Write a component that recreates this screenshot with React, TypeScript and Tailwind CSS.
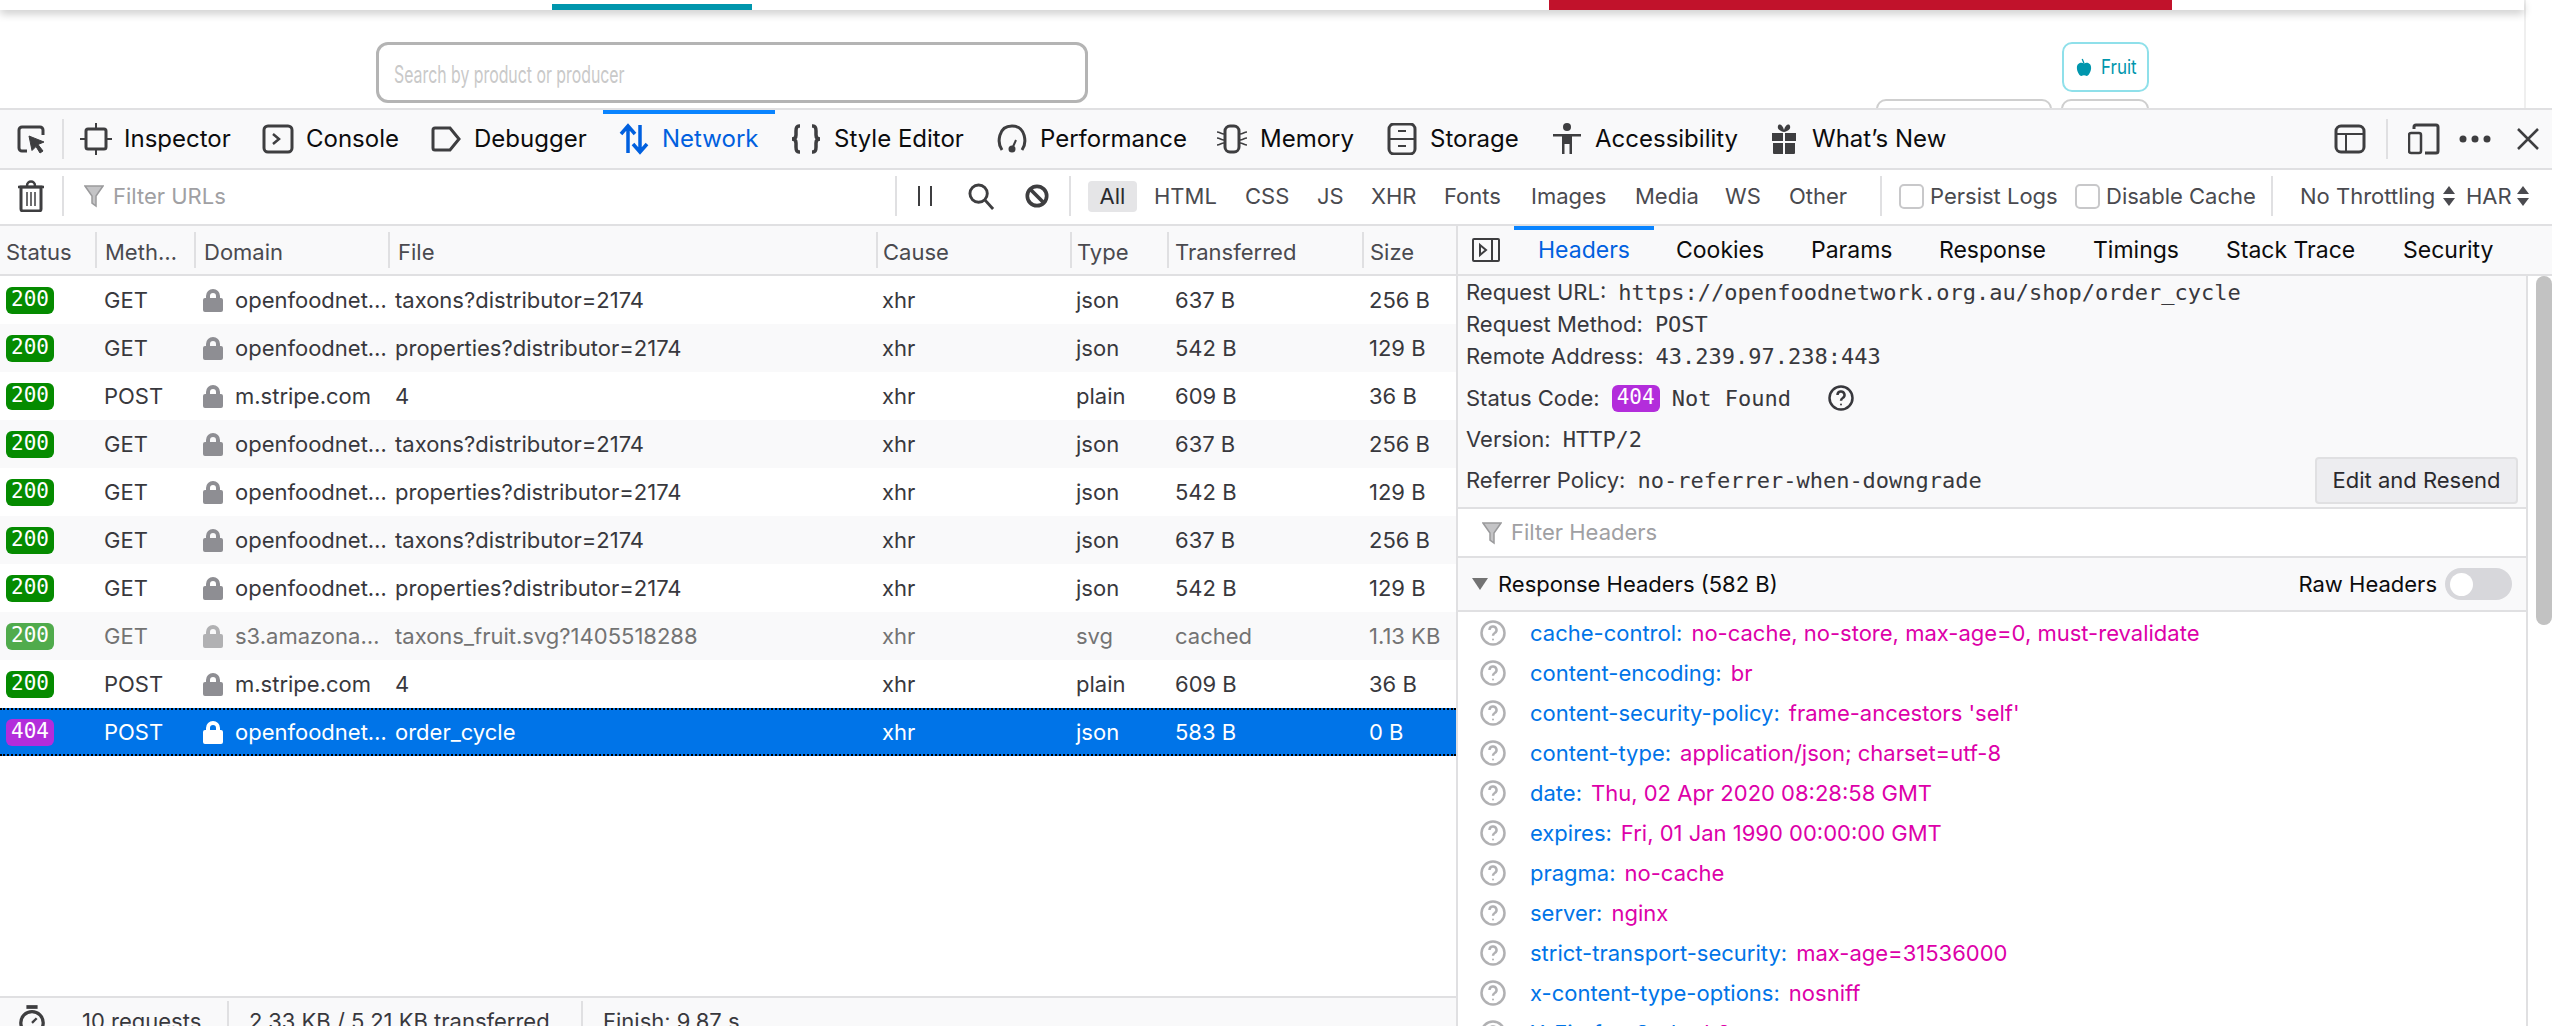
import type { ReactNode } from 'react'

const rows = [
  { status: '200', method: 'GET', domain: 'openfoodnet…', file: 'taxons?distributor=2174', type: 'json', sent: '637 B', size: '256 B' },
  { status: '200', method: 'GET', domain: 'openfoodnet…', file: 'properties?distributor=2174', type: 'json', sent: '542 B', size: '129 B' },
  { status: '200', method: 'POST', domain: 'm.stripe.com', file: '4', type: 'plain', sent: '609 B', size: '36 B' },
  { status: '200', method: 'GET', domain: 'openfoodnet…', file: 'taxons?distributor=2174', type: 'json', sent: '637 B', size: '256 B' },
  { status: '200', method: 'GET', domain: 'openfoodnet…', file: 'properties?distributor=2174', type: 'json', sent: '542 B', size: '129 B' },
  { status: '200', method: 'GET', domain: 'openfoodnet…', file: 'taxons?distributor=2174', type: 'json', sent: '637 B', size: '256 B' },
  { status: '200', method: 'GET', domain: 'openfoodnet…', file: 'properties?distributor=2174', type: 'json', sent: '542 B', size: '129 B' },
  { status: '200', method: 'GET', domain: 's3.amazona…', file: 'taxons_fruit.svg?1405518288', type: 'svg', sent: 'cached', size: '1.13 KB', cached: true },
  { status: '200', method: 'POST', domain: 'm.stripe.com', file: '4', type: 'plain', sent: '609 B', size: '36 B' },
  { status: '404', method: 'POST', domain: 'openfoodnet…', file: 'order_cycle', type: 'json', sent: '583 B', size: '0 B', selected: true },
]

const responseHeaders = [
  ['cache-control:', 'no-cache, no-store, max-age=0, must-revalidate'],
  ['content-encoding:', 'br'],
  ['content-security-policy:', "frame-ancestors 'self'"],
  ['content-type:', 'application/json; charset=utf-8'],
  ['date:', 'Thu, 02 Apr 2020 08:28:58 GMT'],
  ['expires:', 'Fri, 01 Jan 1990 00:00:00 GMT'],
  ['pragma:', 'no-cache'],
  ['server:', 'nginx'],
  ['strict-transport-security:', 'max-age=31536000'],
  ['x-content-type-options:', 'nosniff'],
  ['X-Firefox-Spdy:', 'h2'],
]

const Ico = ({ children, className = 'w-8 h-8' }: { children: ReactNode; className?: string }) => (
  <svg viewBox="0 0 32 32" fill="none" stroke="#3e3e40" strokeWidth="3" className={`shrink-0 ${className}`}>
    {children}
  </svg>
)

const Sep = () => <div className="w-[2px] h-10 bg-[#e0e0e2] shrink-0" />

const Tab = ({ icon, label, className, active }: { icon: ReactNode; label: string; className: string; active?: boolean }) => (
  <div className={`h-full flex items-center gap-3 pl-[15px] border-t-4 pb-1 ${className} ${active ? 'border-[#0a84ff] text-[#0060df]' : 'border-transparent text-[#0c0c0d]'}`}>
    {icon}
    <span>{label}</span>
  </div>
)

const Lock = ({ color }: { color: string }) => (
  <svg viewBox="0 0 20 24" className="w-5 h-6 shrink-0" fill={color}>
    <path d="M3 10V8a7 7 0 0 1 14 0v2h1a2 2 0 0 1 2 2v10a2 2 0 0 1-2 2H2a2 2 0 0 1-2-2V12a2 2 0 0 1 2-2h1Zm4 0h6V8a3 3 0 0 0-6 0v2Z" />
  </svg>
)

const Funnel = ({ className }: { className: string }) => (
  <svg viewBox="0 0 20 24" className={className} fill="#c4c4c6" stroke="#9a9a9c" strokeWidth="1.5">
    <path d="M1 2h18l-7 10v10l-4-3v-7L1 2Z" />
  </svg>
)

const Question = ({ color }: { color: string }) => (
  <svg viewBox="0 0 26 26" className="w-[26px] h-[26px] shrink-0" fill="none" stroke={color} strokeWidth="2.5">
    <circle cx="13" cy="13" r="11.5" />
    <path d="M9.5 10a3.5 3.5 0 1 1 5.2 3c-1.2.7-1.7 1.3-1.7 2.8" />
    <circle cx="13" cy="19.5" r="1" fill={color} stroke="none" />
  </svg>
)

const Badge = ({ code, cached }: { code: string; cached?: boolean }) => (
  <span className={`w-12 h-[27px] shrink-0 rounded-md flex items-center justify-center text-white text-[21px] font-['DejaVu_Sans_Mono',monospace] ${code === '404' ? 'bg-[#b32ddb]' : cached ? 'bg-[#50ab4c]' : 'bg-[#058b00]'}`}>
    {code}
  </span>
)

const Arrows = () => (
  <svg viewBox="0 0 14 22" className="w-[14px] h-[22px] shrink-0" fill="#4a4a4f">
    <path d="M7 1l6 8H1l6-8ZM7 21l-6-8h12l-6 8Z" />
  </svg>
)

const HeadCell = ({ label, className }: { label: string; className: string }) => (
  <div className={`h-9 flex items-center pt-[5px] ${className}`}>{label}</div>
)

const Check = ({ label, className }: { label: string; className: string }) => (
  <div className={`flex items-center gap-[6px] ${className}`}>
    <span className="w-[25px] h-[25px] rounded-[5px] border-2 border-[#c8c8ca] bg-white shrink-0" />
    <span>{label}</span>
  </div>
)

const Summary = ({ label, className, children }: { label: string; className: string; children: ReactNode }) => (
  <div className={`flex items-center gap-3 ${className}`}>
    <span>{label}</span>
    {children}
  </div>
)

const mono = "font-['DejaVu_Sans_Mono',monospace] text-[#38383d]"

export default function App() {
  return (
    <div className="w-[2552px] h-[1026px] overflow-hidden bg-white flex flex-col font-[Inter,sans-serif]">
      {/* page behind devtools */}
      <div className="h-[108px] shrink-0 overflow-hidden flex">
        <div className="w-[2526px] border-r-2 border-[#efefef] h-full">
          <div className="h-[10px] bg-white shadow-[0_4px_8px_rgba(0,0,0,0.2)] flex">
            <div className="w-[552px]" />
            <div className="w-[200px] h-[6px] mt-1 bg-[#0096ad]" />
            <div className="w-[797px]" />
            <div className="w-[623px] h-full bg-[#c1122b]" />
          </div>
          <div className="flex">
            <div className="ml-[376px] mt-8 w-[712px] h-[61px] rounded-xl border-[3px] border-[#b4b4b4] flex items-center pl-[15px] pt-[5px] overflow-hidden">
              <span className="text-[24px] text-[#c9c9c9] origin-left scale-x-[0.66] whitespace-nowrap">Search by product or producer</span>
            </div>
            <div className="ml-[789px] w-[272px] mt-8 flex flex-col items-end">
              <div className="w-[87px] h-[50px] rounded-[10px] border-2 border-[#8fe0ea] flex items-center gap-[9px] pl-[12px] text-[#0096ad] text-[20px]">
                <svg viewBox="0 0 18 20" className="w-[16px] h-[20px] shrink-0" fill="#0096ad">
                  <path d="M9 6c3-1.500 8-.8 8 5 0 4-3 9-5 9-1 0-2-.6-3-.6S7 20 6 20c-2 0-5-5-5-9 0-5.800 5-6.500 8-5Z" />
                  <path d="M9 6 7 1" stroke="#0096ad" strokeWidth="1.500" />
                </svg>
                <span className="origin-left scale-x-[0.85]">Fruit</span>
              </div>
              <div className="flex gap-[9px] mt-[7px]">
                <div className="w-[176px] h-5 rounded-t-[10px] border-2 border-[#cfcfcf]" />
                <div className="w-[88px] h-5 rounded-t-[10px] border-2 border-[#cfcfcf]" />
              </div>
            </div>
          </div>
        </div>
      </div>

      {/* devtools toolbar */}
      <div className="h-[58px] shrink-0 border-y-2 border-[#e0e0e2] bg-[#f9f9fa] flex items-center text-[24px] box-content -mb-[2px]">
        <div className="w-[62px] flex justify-center shrink-0">
          <Ico>
            <path d="M12 28H7a3 3 0 0 1-3-3V7a3 3 0 0 1 3-3h18a3 3 0 0 1 3 3v5" />
            <path d="M14 13l15 6-6 2.500L28 28l-3 2-4-6.500-4 4-3-14.500Z" fill="#3e3e40" strokeWidth="1" />
          </Ico>
        </div>
        <Sep />
        <div className="flex items-center h-full w-[2270px] shrink-0 pl-px">
          <Tab className="w-[182px]" label="Inspector" icon={<Ico><rect x="6" y="6" width="20" height="20" rx="2" /><path d="M16 0v6M16 26v6M0 16h6M26 16h6" strokeWidth="2" /></Ico>} />
          <Tab className="w-[168px]" label="Console" icon={<Ico><rect x="2" y="3" width="28" height="26" rx="4" /><path d="M11 11l6 5-6 5" strokeWidth="2.500" /></Ico>} />
          <Tab className="w-[188px]" label="Debugger" icon={<Ico><path d="M5 5h15l9 11-9 11H5a2 2 0 0 1-2-2V7a2 2 0 0 1 2-2Z" /></Ico>} />
          <Tab active className="w-[172px]" label="Network" icon={
            <Ico>
              <path d="M10 30V4M3 11l7-8 7 8" stroke="#0060df" strokeWidth="3.500" />
              <path d="M22 2v26M15 21l7 8 7-8" stroke="#0060df" strokeWidth="3.500" />
            </Ico>
          } />
          <Tab className="w-[206px]" label="Style Editor" icon={<Ico><path d="M10 3H9C6 3 6 6 6 8v4c0 2-1 4-4 4 3 0 4 2 4 4v4c0 2 0 5 3 5h1M22 3h1c3 0 3 3 3 5v4c0 2 1 4 4 4-3 0-4 2-4 4v4c0 2 0 5-3 5h-1" strokeWidth="3.500" /></Ico>} />
          <Tab className="w-[220px]" label="Performance" icon={<Ico><path d="M6 27C1 20 2 3 16 3s15 17 10 24" /><circle cx="16" cy="26" r="3.500" fill="#3e3e40" stroke="none" /><path d="M16 26l4-9" strokeWidth="2" /></Ico>} />
          <Tab className="w-[170px]" label="Memory" icon={<Ico><rect x="9" y="3" width="14" height="26" rx="5" /><path d="M1 9c3 0 4 2 7 2M1 15c3 0 4 2 7 2M1 22c3 0 4-2 7-2M31 9c-3 0-4 2-7 2M31 15c-3 0-4 2-7 2M31 22c-3 0-4-2-7-2" strokeWidth="1.500" /></Ico>} />
          <Tab className="w-[165px]" label="Storage" icon={<Ico><rect x="3" y="1" width="26" height="30" rx="5" /><path d="M3 16h26M12 8h8M12 23h8" strokeWidth="2" /></Ico>} />
          <Tab className="w-[217px]" label="Accessibility" icon={
            <Ico>
              <circle cx="16" cy="4" r="4" fill="#3e3e40" stroke="none" />
              <path d="M2 11h28v2.500h-9V31h-2.500V21h-5v10H11V13.500H2V11Z" fill="#3e3e40" stroke="none" />
            </Ico>
          } />
          <Tab className="w-[230px]" label="What’s New" icon={
            <Ico>
              <path d="M4 10h11v8H4zM17 10h11v8H17zM5 20h10v11H6a1 1 0 0 1-1-1zM17 20h10v10a1 1 0 0 1-1 1h-9z" fill="#3e3e40" stroke="none" />
              <path d="M16 9c-4-1-7-3-6-6s5-1 6 4c1-5 5-7 6-4s-2 5-6 6Z" fill="#3e3e40" stroke="none" />
            </Ico>
          } />
          <div className="flex-1" />
        </div>
        <div className="flex items-center shrink-0">
          <Ico><rect x="2" y="3" width="28" height="26" rx="5" /><path d="M2 11h28M12 11v18" strokeWidth="2" /></Ico>
          <div className="mx-[20px]"><Sep /></div>
          <Ico><rect x="1" y="10" width="12" height="20" rx="2" strokeWidth="2.500" /><path d="M6 6V4a2 2 0 0 1 2-2h20a2 2 0 0 1 2 2v24a2 2 0 0 1-2 2H17" /></Ico>
          <svg viewBox="0 0 32 8" className="w-8 h-2 ml-[19px] shrink-0" fill="#3e3e40">
            <circle cx="4" cy="4" r="3.500" /><circle cx="16" cy="4" r="3.500" /><circle cx="28" cy="4" r="3.500" />
          </svg>
          <svg viewBox="0 0 24 24" className="w-6 h-6 ml-[25px] shrink-0" fill="none" stroke="#3e3e40" strokeWidth="2.500">
            <path d="M2 2l20 20M22 2L2 22" />
          </svg>
        </div>
      </div>

      {/* filter bar */}
      <div className="h-[58px] shrink-0 border-b-2 border-[#e0e0e2] flex items-center text-[22px] text-[#4a4a4f]">
        <div className="w-[62px] flex justify-center shrink-0">
          <svg viewBox="0 0 26 32" className="w-[26px] h-8" fill="none" stroke="#3e3e40" strokeWidth="3">
            <path d="M0 7h26M9 6c0-6 8-6 8 0" strokeWidth="2.500" />
            <path d="M3 7h20v22a2 2 0 0 1-2 2H5a2 2 0 0 1-2-2V7Z" />
            <path d="M9 12v14M13 12v14M17 12v14" strokeWidth="1.500" />
          </svg>
        </div>
        <Sep />
        <div className="w-[831px] shrink-0 flex items-center gap-[9px] pl-5 text-[#a0a0a3]">
          <Funnel className="w-5 h-6 shrink-0" />
          <span>Filter URLs</span>
        </div>
        <Sep />
        <div className="w-[172px] shrink-0 flex items-center">
          <svg viewBox="0 0 14 20" className="w-[14px] h-5 ml-[21px] shrink-0" fill="#3e3e40"><path d="M0 0h2v20H0zM12 0h2v20h-2z" /></svg>
          <svg viewBox="0 0 28 28" className="w-[27px] h-[27px] ml-[36px] shrink-0" fill="none" stroke="#3e3e40" strokeWidth="3"><circle cx="11" cy="11" r="9" /><path d="M17 17l9 10" /></svg>
          <svg viewBox="0 0 26 26" className="w-6 h-6 ml-[30px] shrink-0" fill="none" stroke="#3e3e40" strokeWidth="4"><circle cx="13" cy="13" r="10.500" /><path d="M6 6l14 14" /></svg>
        </div>
        <Sep />
        <div className="flex items-center h-full shrink-0 w-[809px]">
          <span className="ml-[17px] w-[49px] h-[31px] flex items-center justify-center rounded-[4px] bg-[#e5e5e7] text-[#2a2a2e]">All</span>
          <span className="ml-[17px] w-[91px]">HTML</span>
          <span className="w-[72px]">CSS</span>
          <span className="w-[54px]">JS</span>
          <span className="w-[73px]">XHR</span>
          <span className="w-[87px]">Fonts</span>
          <span className="w-[104px]">Images</span>
          <span className="w-[90px]">Media</span>
          <span className="w-[64px]">WS</span>
          <span>Other</span>
        </div>
        <Sep />
        <Check label="Persist Logs" className="ml-[17px] w-[176px] shrink-0" />
        <Check label="Disable Cache" className="w-[196px] shrink-0" />
        <Sep />
        <span className="ml-[27px] w-[142px] shrink-0 whitespace-nowrap">No Throttling</span>
        <Arrows />
        <span className="ml-[10px] w-[50px] shrink-0">HAR</span>
        <Arrows />
      </div>

      <div className="flex-1 min-h-0 flex items-start">
        {/* requests */}
        <div className="w-[1456px] shrink-0 text-[22px] text-[#38383d]">
          <div className="h-[770px] flex flex-col">
            <div className="h-[50px] shrink-0 bg-[#f9f9fa] border-b-2 border-[#e0e0e2] grid grid-cols-[95px_99px_194px_488px_194px_97px_195px_94px] items-center text-[#4a4a4f]">
              <HeadCell label="Status" className="pl-[6px]" />
              <HeadCell label="Meth…" className="pl-2 border-l-2 border-[#e0e0e2]" />
              <HeadCell label="Domain" className="pl-2 border-l-2 border-[#e0e0e2]" />
              <HeadCell label="File" className="pl-2 border-l-2 border-[#e0e0e2]" />
              <HeadCell label="Cause" className="pl-[5px] border-l-2 border-[#e0e0e2]" />
              <HeadCell label="Type" className="pl-[5px] border-l-2 border-[#e0e0e2]" />
              <HeadCell label="Transferred" className="pl-[6px] border-l-2 border-[#e0e0e2]" />
              <HeadCell label="Size" className="pl-[6px] border-l-2 border-[#e0e0e2]" />
            </div>
            {rows.map((row, i) => (
              <div
                key={i}
                className={`h-12 shrink-0 grid grid-cols-[95px_99px_194px_488px_194px_97px_195px_94px] items-center whitespace-nowrap ${
                  row.selected
                    ? 'bg-[#0074e8] text-white border-y-2 border-dotted border-black'
                    : row.cached
                      ? 'bg-[#f9f9fa] text-[#737373]'
                      : i % 2 === 1
                        ? 'bg-[#f9f9fa]'
                        : 'bg-white'
                }`}
              >
                <div className="pl-[6px]"><Badge code={row.status} cached={row.cached} /></div>
                <div className="pl-[9px]">{row.method}</div>
                <div className="pl-[9px] flex items-center gap-3">
                  <Lock color={row.selected ? '#ffffff' : row.cached ? '#b1b1b3' : '#8e8e93'} />
                  <span>{row.domain}</span>
                </div>
                <div className="pl-[7px]">{row.file}</div>
                <div className="pl-[6px]">xhr</div>
                <div className="pl-[6px]">{row.type}</div>
                <div className="pl-2">{row.sent}</div>
                <div className="pl-[7px]">{row.size}</div>
              </div>
            ))}
          </div>
          <div className="h-12 border-t-2 border-[#e0e0e2] bg-[#f9f9fa] flex items-center">
            <svg viewBox="0 0 30 34" className="w-[28px] h-8 ml-[18px] shrink-0" fill="none" stroke="#3e3e40" strokeWidth="3.500">
              <path d="M9 2h12" strokeWidth="4" />
              <circle cx="15" cy="19" r="12" />
              <path d="M15 19l5-5" strokeWidth="2.500" />
            </svg>
            <span className="ml-[36px] w-[145px] shrink-0">10 requests</span>
            <div className="w-[2px] h-10 bg-[#e0e0e2]" />
            <span className="ml-[20px] w-[332px] shrink-0 whitespace-nowrap">2.33 KB / 5.21 KB transferred</span>
            <div className="w-[2px] h-10 bg-[#e0e0e2]" />
            <span className="ml-[20px]">Finish: 9.87 s</span>
          </div>
        </div>

        {/* details sidebar */}
        <div className="flex-1 min-w-0 h-full border-l-2 border-[#e0e0e2] text-[22px] text-[#38383d]">
          <div className="h-[50px] bg-[#f9f9fa] border-b-2 border-[#e0e0e2] flex items-center text-[#0c0c0d] text-[23px]">
            <svg viewBox="0 0 28 24" className="w-7 h-6 ml-[14px] shrink-0" fill="none" stroke="#3e3e40" strokeWidth="2">
              <rect x="1" y="1" width="26" height="22" rx="1" />
              <path d="M20 1v22" />
              <path d="M8 7l6 5-6 5V7Z" />
            </svg>
            <div className="flex items-center h-full ml-[14px]">
              <div className="w-[140px] h-full border-t-4 border-[#0a84ff] text-[#0060df] flex items-center justify-center pb-1">Headers</div>
              <span className="ml-[22px] w-[135px]">Cookies</span>
              <span className="w-[128px]">Params</span>
              <span className="w-[154px]">Response</span>
              <span className="w-[133px]">Timings</span>
              <span className="w-[177px]">Stack Trace</span>
              <span>Security</span>
            </div>
          </div>
          <div className="flex">
            <div className="w-[1070px] shrink-0 border-r-2 border-[#e0e0e2] flex flex-col">
              <div className="h-[231px] bg-[#f9f9fa] border-b-2 border-[#e0e0e2] pl-2 box-content flex flex-col">
                <Summary label="Request URL:" className="h-[33px]">
                  <span className={mono}>https://openfoodnetwork.org.au/shop/order_cycle</span>
                </Summary>
                <Summary label="Request Method:" className="h-[31px]">
                  <span className={mono}>POST</span>
                </Summary>
                <Summary label="Remote Address:" className="h-[32px]">
                  <span className={mono}>43.239.97.238:443</span>
                </Summary>
                <Summary label="Status Code:" className="h-[52px]">
                  <Badge code="404" />
                  <span className={mono}>Not Found</span>
                  <span className="ml-[25px]"><Question color="#38383d" /></span>
                </Summary>
                <Summary label="Version:" className="h-[30px]">
                  <span className={mono}>HTTP/2</span>
                </Summary>
                <div className="flex-1 flex items-center justify-between pr-2">
                  <div className="flex items-center gap-3">
                    <span>Referrer Policy:</span>
                    <span className={mono}>no-referrer-when-downgrade</span>
                  </div>
                  <button className="w-[203px] h-[47px] rounded-[4px] bg-[#ededf0] border-2 border-[#e0e0e2] text-[#2a2a2e]">Edit and Resend</button>
                </div>
              </div>
              <div className="h-[47px] border-b-2 border-[#e0e0e2] box-content flex items-center gap-[9px] pl-6 text-[#a0a0a3]">
                <Funnel className="w-5 h-6 shrink-0" />
                <span>Filter Headers</span>
              </div>
              <div className="h-[54px] bg-[#f9f9fa] border-b-2 border-[#e0e0e2] flex items-center pl-[14px] pr-[14px]">
                <svg viewBox="0 0 16 12" className="w-4 h-3 mr-[10px] shrink-0" fill="#737373"><path d="M0 0h16l-8 12L0 0Z" /></svg>
                <span className="text-[#0c0c0d]">Response Headers (582 B)</span>
                <span className="ml-auto text-[#0c0c0d]">Raw Headers</span>
                <div className="ml-[8px] w-[67px] h-[32px] rounded-full bg-[#d7d7db] flex items-center pl-[5px]">
                  <div className="w-[23px] h-[23px] rounded-full bg-white" />
                </div>
              </div>
              <div className="pt-[1px] flex flex-col">
                {responseHeaders.map(([name, value]) => (
                  <div key={name} className="h-10 shrink-0 flex items-center pl-[22px] whitespace-nowrap">
                    <Question color="#b1b1b3" />
                    <span className="ml-[24px] text-[#0074e8]">{name}</span>
                    <span className="ml-[9px] text-[#dd00a9]">{value}</span>
                  </div>
                ))}
              </div>
            </div>
            <div className="flex-1 flex justify-end">
              <div className="w-4 h-[349px] rounded-full bg-[#c2c2c2]" />
            </div>
          </div>
        </div>
      </div>
    </div>
  )
}
